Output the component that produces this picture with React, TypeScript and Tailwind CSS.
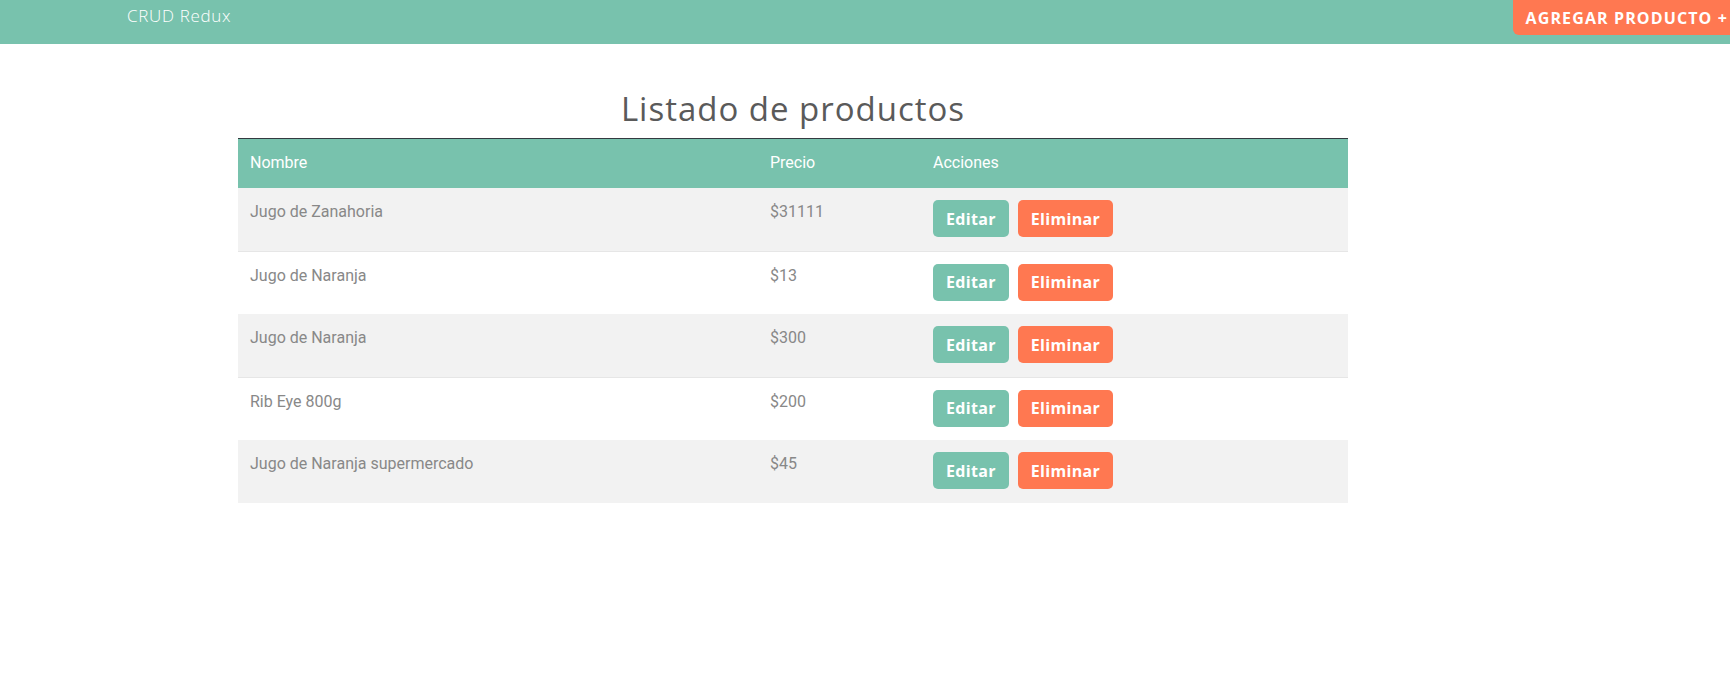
import React from 'react';

const productos = [
  { id: 1, nombre: 'Jugo de Zanahoria', precio: 31111 },
  { id: 2, nombre: 'Jugo de Naranja', precio: 13 },
  { id: 3, nombre: 'Jugo de Naranja', precio: 300 },
  { id: 4, nombre: 'Rib Eye 800g', precio: 200 },
  { id: 5, nombre: 'Jugo de Naranja supermercado', precio: 45 },
];

const heading = "font-['Open_Sans',sans-serif]";

export default function App() {
  return (
    <div className="min-h-[693px] bg-white font-['Roboto',sans-serif] overflow-hidden">
      {/* Navbar */}
      <header className="h-[44px] bg-[#78c2ad] flex items-start justify-between">
        <h1 className={`${heading} pl-[127px] pt-[4px] text-[17px] tracking-[0.04em] font-light text-white leading-[24px]`}>
          CRUD Redux
        </h1>
        <button
          className={`${heading} shrink-0 h-[35px] mr-[-4px] pl-[13px] pr-[6px] rounded-bl-md bg-[#ff7851] text-white text-[16px] tracking-[0.07em] font-bold uppercase leading-none`}
        >
          Agregar producto +
        </button>
      </header>

      {/* Listado */}
      <main className="ml-[238px] w-[1110px] pt-[46px]">
        <h2 className={`${heading} text-center text-[33px] tracking-[0.03em] leading-[38px] text-[#5a5a5a] font-normal mb-[10px]`}>
          Listado de productos
        </h2>
        <table className="w-full border-collapse text-[16px] leading-[24px]">
          <thead>
            <tr className="bg-[#78c2ad] border-t border-[#343a40] text-white text-left">
              <th className="w-[520px] px-3 pt-[12px] pb-[13px] font-normal">Nombre</th>
              <th className="w-[163px] px-3 pt-[12px] pb-[13px] font-normal">Precio</th>
              <th className="px-3 pt-[12px] pb-[13px] font-normal">Acciones</th>
            </tr>
          </thead>
          <tbody>
            {productos.map((p, i) => (
              <tr
                key={p.id}
                className={`h-[63px] align-top text-[#888888] ${i % 2 === 0 ? 'bg-[#f2f2f2]' : 'bg-white border-t border-[#e6e6e6]'}`}
              >
                <td className="px-3 py-3">{p.nombre}</td>
                <td className="px-3 py-3">${p.precio}</td>
                <td className="px-3 pt-[12px]">
                  <div className="flex gap-[9px]">
                    <button className={`${heading} h-[37px] px-[13px] rounded-[5px] bg-[#78c2ad] text-white font-bold text-[16px] tracking-[0.02em]`}>
                      Editar
                    </button>
                    <button className={`${heading} h-[37px] px-[13px] rounded-[5px] bg-[#ff7851] text-white font-bold text-[16px] tracking-[0.02em]`}>
                      Eliminar
                    </button>
                  </div>
                </td>
              </tr>
            ))}
          </tbody>
        </table>
      </main>
    </div>
  );
}
